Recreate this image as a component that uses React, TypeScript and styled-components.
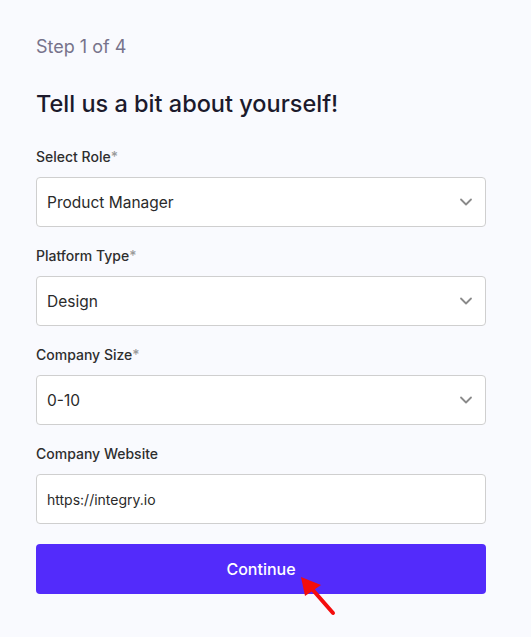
import React from 'react';
import styled, { createGlobalStyle } from 'styled-components';

const GlobalStyle = createGlobalStyle`
  html, body {
    margin: 0;
    padding: 0;
    background: #f9fafe;
  }
  * {
    box-sizing: border-box;
  }
`;

const fields = [
  { label: 'Select Role', required: true, value: 'Product Manager', select: true },
  { label: 'Platform Type', required: true, value: 'Design', select: true },
  { label: 'Company Size', required: true, value: '0-10', select: true },
  { label: 'Company Website', required: false, value: 'https://integry.io', select: false },
];

function Chevron() {
  return (
    <svg width="14" height="14" viewBox="0 0 14 14" fill="none">
      <path d="M2 4.5L7 9.5L12 4.5" stroke="#8a8a8a" strokeWidth="1.8" strokeLinecap="round" strokeLinejoin="round" />
    </svg>
  );
}

function App() {
  return (
    <Wrapper>
      <GlobalStyle />
      <Step>Step 1 of 4</Step>
      <Title>Tell us a bit about yourself!</Title>
      <Form>
        {fields.map((f) => (
          <Field key={f.label}>
            <Label>
              {f.label}
              {f.required && <Star>*</Star>}
            </Label>
            <Box>
              <BoxText $small={!f.select}>{f.value}</BoxText>
              {f.select && <Chevron />}
            </Box>
          </Field>
        ))}
      </Form>
      <ButtonWrap>
        <Button>Continue</Button>
        <Pointer width="45" height="45" viewBox="0 0 45 45">
          <line x1="17" y1="17" x2="38" y2="41" stroke="#f40d0d" strokeWidth="4" strokeLinecap="round" />
          <polygon points="6,5 26,13 10,24" fill="#f40d0d" />
        </Pointer>
      </ButtonWrap>
    </Wrapper>
  );
}

const Wrapper = styled.div`
  width: 100%;
  min-height: 637px;
  padding: 36px 45px 40px 36px;
  font-family: Inter, 'Noto Sans', sans-serif;
  background-color: #f9fafe;
`;
const Step = styled.div`
  font-size: 18px;
  line-height: 22px;
  color: #77738b;
`;
const Title = styled.h1`
  margin: 32px 0 0;
  font-size: 23.5px;
  line-height: 28px;
  font-weight: 500;
  color: #1c1a2c;
`;
const Form = styled.div`
  margin-top: 30px;
  display: flex;
  flex-direction: column;
  gap: 20px;
`;
const Field = styled.div`
  display: flex;
  flex-direction: column;
  gap: 11px;
`;
const Label = styled.label`
  font-size: 14px;
  line-height: 18px;
  font-weight: 500;
  color: #2e2e2e;
`;
const Star = styled.span`
  color: #9a9a9a;
`;
const Box = styled.div`
  height: 50px;
  background: #fff;
  border: 1px solid #cfcfcf;
  border-radius: 4px;
  padding: 0 12px 0 10px;
  display: flex;
  align-items: center;
  justify-content: space-between;
`;
const BoxText = styled.span<{ $small?: boolean }>`
  font-size: ${(p) => (p.$small ? '14px' : '15.5px')};
  color: #2a2a2a;
`;
const ButtonWrap = styled.div`
  position: relative;
  margin-top: 20px;
`;
const Button = styled.button`
  width: 100%;
  height: 50px;
  border: none;
  border-radius: 4px;
  background: #532bfb;
  color: #fff;
  font-family: Inter, 'Noto Sans', sans-serif;
  font-size: 16px;
  font-weight: 500;
`;
const Pointer = styled.svg`
  position: absolute;
  left: 259px;
  top: 28px;
`;

export default App;
